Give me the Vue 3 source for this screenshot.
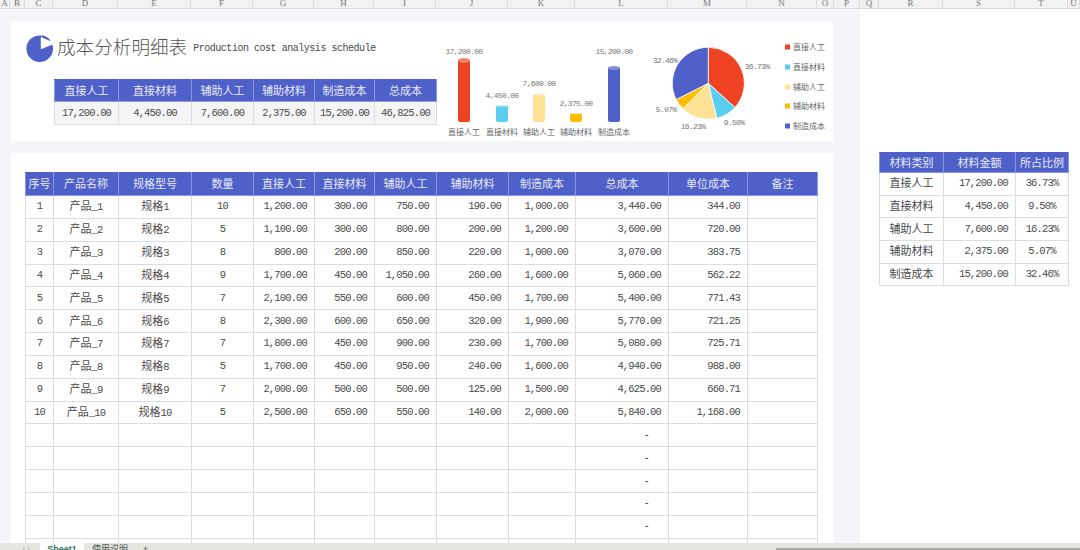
<template>
  <div class="sheet">
    <div class="col-head">
      <span v-for="c in sheetCols" :key="c.name" class="col-name" :style="{ width: c.w + 'px' }">{{ c.name }}</span>
    </div>

    <div class="main">
      <div class="left">
        <section class="card top-card">
          <div class="summary">
            <div class="title-row">
              <svg class="logo" width="28" height="28" viewBox="26 35 28 28">
                <circle cx="39.7" cy="48.7" r="13.3" fill="#4f60c8" />
                <path d="M40.8 38.2V49.2L54 44V36H42Z" fill="#fff" />
                <path d="M42 35.3A13.3 13.3 0 0 1 52 43.4L50.8 41.2 42 37.5Z" fill="#4f60c8" />
              </svg>
              <h1>成本分析明细表</h1>
              <span class="subtitle">Production cost analysis schedule</span>
            </div>
            <table class="sum-table">
              <colgroup>
                <col v-for="w in sumWidths" :key="w" :style="{ width: w + 'px' }" />
              </colgroup>
              <thead>
                <tr><th v-for="h in sumHeads" :key="h">{{ h }}</th></tr>
              </thead>
              <tbody>
                <tr><td v-for="v in sumValues" :key="v" class="num center">{{ v }}</td></tr>
              </tbody>
            </table>
          </div>

          <svg class="chart" width="204" height="120" viewBox="436 21 204 120">
            <g v-for="b in bars" :key="b.label">
              <path :d="barPath(b)" :fill="b.color" />
              <ellipse :cx="b.x + 6" :cy="b.top" rx="6" :ry="b.ry" :fill="b.cap" />
              <text class="chart-num" :x="b.x + 6" :y="b.valueY" text-anchor="middle">{{ b.value }}</text>
              <text class="chart-cjk" :x="b.x + 6" y="135" text-anchor="middle">{{ b.label }}</text>
            </g>
          </svg>

          <svg class="chart" width="193" height="120" viewBox="640 21 193 120">
            <path v-for="s in slices" :key="s.name" :d="s.d" :fill="s.color" stroke="#fff" stroke-width="0.8" />
            <text v-for="s in slices" :key="s.pct" class="chart-num" :x="s.lx" :y="s.ly" text-anchor="middle">{{ s.pct }}</text>
            <g v-for="s in slices" :key="s.name + 'l'">
              <rect x="785" :y="s.legendY - 2.5" width="5" height="5" :fill="s.color" />
              <text class="chart-cjk" x="793" :y="s.legendY + 3">{{ s.name }}</text>
            </g>
          </svg>
        </section>

        <section class="card detail-card">
          <table class="grid">
            <colgroup>
              <col v-for="(w, i) in detailWidths" :key="i" :style="{ width: w + 'px' }" />
            </colgroup>
            <thead>
              <tr><th v-for="h in detailHeads" :key="h">{{ h }}</th></tr>
            </thead>
            <tbody>
              <tr v-for="r in rows" :key="r.id">
                <td class="num center">{{ r.id }}</td>
                <td class="center lift">产品<span class="num">_{{ r.id }}</span></td>
                <td class="center lift">规格<span class="num">{{ r.id }}</span></td>
                <td class="num center">{{ r.qty }}</td>
                <td v-for="(v, i) in r.costs" :key="i" class="num end">{{ v }}</td>
                <td class="num end">{{ r.total }}</td>
                <td class="num end">{{ r.unit }}</td>
                <td></td>
              </tr>
              <tr v-for="n in 6" :key="'e' + n">
                <td v-for="c in 9" :key="c"></td>
                <td class="num dash">-</td>
                <td></td>
                <td></td>
              </tr>
            </tbody>
          </table>
        </section>
      </div>

      <div class="side">
        <table class="grid share">
          <colgroup>
            <col class="c1" /><col class="c2" /><col class="c3" />
          </colgroup>
          <thead>
            <tr><th>材料类别</th><th>材料金额</th><th>所占比例</th></tr>
          </thead>
          <tbody>
            <tr v-for="s in slices" :key="s.name">
              <td class="center lift">{{ s.name }}</td>
              <td class="num end">{{ s.amount }}</td>
              <td class="num center">{{ s.pct }}</td>
            </tr>
          </tbody>
        </table>
      </div>
    </div>

    <div class="tabs">
      <span class="nav">‹ ›</span>
      <span class="tab active">Sheet1</span>
      <span class="tab">使用说明</span>
      <span class="plus">+</span>
      <span class="scroll"></span>
    </div>
  </div>
</template>

<script setup>
const colNames = ['A', 'B', 'C', 'D', 'E', 'F', 'G', 'H', 'I', 'J', 'K', 'L', 'M', 'N', 'O', 'P', 'Q', 'R', 'S', 'T', 'U']
const colWidths = [10, 15, 28, 65, 73, 62, 61, 60, 62, 72, 67, 93, 79, 70, 17, 26, 19, 64, 72, 53, 12]
const sheetCols = colNames.map((name, i) => ({ name, w: colWidths[i] }))

const sumHeads = ['直接人工', '直接材料', '辅助人工', '辅助材料', '制造成本', '总成本']
const sumValues = ['17,200.00', '4,450.00', '7,600.00', '2,375.00', '15,200.00', '46,825.00']
const sumWidths = [64, 73, 62, 61, 60, 62]

const detailWidths = [28, 65, 73, 62, 61, 60, 62, 72, 67, 93, 79, 70]
const detailHeads = ['序号', '产品名称', '规格型号', '数量', '直接人工', '直接材料', '辅助人工', '辅助材料', '制造成本', '总成本', '单位成本', '备注']

const rows = [
  [10, '1,200.00', '300.00', '750.00', '190.00', '1,000.00', '3,440.00', '344.00'],
  [5, '1,100.00', '300.00', '800.00', '200.00', '1,200.00', '3,600.00', '720.00'],
  [8, '800.00', '200.00', '850.00', '220.00', '1,000.00', '3,070.00', '383.75'],
  [9, '1,700.00', '450.00', '1,050.00', '260.00', '1,600.00', '5,060.00', '562.22'],
  [7, '2,100.00', '550.00', '600.00', '450.00', '1,700.00', '5,400.00', '771.43'],
  [8, '2,300.00', '600.00', '650.00', '320.00', '1,900.00', '5,770.00', '721.25'],
  [7, '1,800.00', '450.00', '900.00', '230.00', '1,700.00', '5,080.00', '725.71'],
  [5, '1,700.00', '450.00', '950.00', '240.00', '1,600.00', '4,940.00', '988.00'],
  [7, '2,000.00', '500.00', '500.00', '125.00', '1,500.00', '4,625.00', '660.71'],
  [5, '2,500.00', '650.00', '550.00', '140.00', '2,000.00', '5,840.00', '1,168.00']
].map((r, i) => ({ id: i + 1, qty: r[0], costs: r.slice(1, 6), total: r[6], unit: r[7] }))

const bars = [
  { label: '直接人工', value: '17,200.00', x: 458, top: 60.5, ry: 2.5, valueY: 53.5, color: '#ee4222', cap: '#f1806c' },
  { label: '直接材料', value: '4,450.00', x: 496, top: 106.5, ry: 1, valueY: 98, color: '#5bcdf0', cap: '#7fd9f4' },
  { label: '辅助人工', value: '7,600.00', x: 533, top: 95, ry: 1, valueY: 86, color: '#fde194', cap: '#fde9b0' },
  { label: '辅助材料', value: '2,375.00', x: 570, top: 114, ry: 0.5, valueY: 105.5, color: '#fdbd00', cap: '#fdbd00' },
  { label: '制造成本', value: '15,200.00', x: 608, top: 68, ry: 2, valueY: 53.5, color: '#4f60c8', cap: '#8490dc' }
]

const barPath = (b) => {
  const r = 2
  return `M${b.x} ${b.top}H${b.x + 12}V${122 - r}Q${b.x + 12} 122 ${b.x + 10} 122H${b.x + 2}Q${b.x} 122 ${b.x} ${122 - r}Z`
}

// pie starts at 12 o'clock and goes clockwise
const cx = 708.3
const cy = 83.3
const radius = 36
const pieData = [
  { name: '直接人工', amount: '17,200.00', pct: '36.73%', share: 36.73, color: '#ee4222', lx: 757, ly: 68.5, legendY: 47 },
  { name: '直接材料', amount: '4,450.00', pct: '9.50%', share: 9.5, color: '#5bcdf0', lx: 734, ly: 124.5, legendY: 67 },
  { name: '辅助人工', amount: '7,600.00', pct: '16.23%', share: 16.23, color: '#fde194', lx: 693, ly: 128.5, legendY: 87 },
  { name: '辅助材料', amount: '2,375.00', pct: '5.07%', share: 5.07, color: '#fdbd00', lx: 666, ly: 111.5, legendY: 106 },
  { name: '制造成本', amount: '15,200.00', pct: '32.46%', share: 32.46, color: '#4f60c8', lx: 665, ly: 62.5, legendY: 126 }
]

let acc = 0
const point = (share) => {
  const a = (share / 100) * Math.PI * 2
  return `${(cx + radius * Math.sin(a)).toFixed(2)} ${(cy - radius * Math.cos(a)).toFixed(2)}`
}
const slices = pieData.map((s) => {
  const from = point(acc)
  acc += s.share
  const to = point(acc)
  return { ...s, d: `M${cx} ${cy}L${from}A${radius} ${radius} 0 ${s.share > 50 ? 1 : 0} 1 ${to}Z` }
})
</script>

<style>
html, body {
  margin: 0;
  overflow: hidden;
}
</style>

<style scoped>
.sheet {
  width: 1080px;
  height: 550px;
  display: flex;
  flex-direction: column;
  overflow: hidden;
  background: #fff;
  font-family: "Noto Sans CJK SC", sans-serif;
  font-size: 11px;
  color: #4a4a4a;
}

.col-head {
  height: 9px;
  flex: none;
  display: flex;
  overflow: hidden;
  background: #f2f2f2;
  border-bottom: 1px solid #d9d9d9;
  box-sizing: border-box;
}

.col-name {
  flex: none;
  box-sizing: border-box;
  border-right: 1px solid #dcdcdc;
  font-family: "Liberation Serif", serif;
  font-size: 9px;
  line-height: 6px;
  text-align: center;
  color: #777;
}

.main {
  flex: 1;
  min-height: 0;
  display: flex;
  overflow: hidden;
}

.left {
  width: 860px;
  flex: none;
  box-sizing: border-box;
  padding: 12px 27px 0 11px;
  background: #f4f5f8;
  display: flex;
  flex-direction: column;
  gap: 12px;
}

.card {
  background: #fff;
}

.top-card {
  height: 120px;
  flex: none;
  display: flex;
}

.summary {
  width: 425px;
  flex: none;
  box-sizing: border-box;
  padding: 14px 0 0 15px;
}

.title-row {
  height: 28px;
  display: flex;
  align-items: center;
}

.logo {
  flex: none;
  margin-right: 3px;
}

h1 {
  margin: -8px 0 0;
  font-size: 18.6px;
  font-weight: 300;
  color: #555;
  white-space: nowrap;
}

.subtitle {
  margin: -1px 0 0 6px;
  font-family: "Liberation Mono", monospace;
  font-size: 10px;
  letter-spacing: -0.47px;
  color: #4a4a4a;
  white-space: nowrap;
}

table {
  border-collapse: collapse;
  table-layout: fixed;
}

th {
  box-sizing: border-box;
  background: #4f60c8;
  color: #e8ebfa;
  font-weight: 400;
  padding: 0 0 2px;
  border: 1px solid #8a97e2;
  border-top-color: #4f60c8;
  border-bottom-color: #8a97e2;
}

td {
  box-sizing: border-box;
  padding: 0 0 1px;
  border: 1px solid #dcdce2;
  white-space: nowrap;
}

td.lift {
  padding-bottom: 3px;
}

.sum-table {
  width: 382px;
  margin: 16px 0 0 28px;
}

.sum-table th {
  height: 22px;
}

.sum-table td {
  height: 23px;
  background: #f5f5f5;
}

.chart {
  flex: none;
  display: block;
}

.chart-num {
  font-family: "Liberation Mono", monospace;
  font-size: 8px;
  letter-spacing: -0.7px;
  fill: #777;
}

.chart-cjk {
  font-size: 8px;
  fill: #666;
}

.detail-card {
  flex: 1;
  min-height: 0;
  box-sizing: border-box;
  padding: 19px 0 0 14px;
  overflow: hidden;
}

.grid {
  width: 792px;
}

.grid th {
  height: 23px;
}

.grid td {
  height: 22.85px;
}

.num {
  font-family: "Liberation Mono", monospace;
  font-size: 10.5px;
  letter-spacing: -0.85px;
}

.center {
  text-align: center;
}

td.end {
  text-align: right;
  padding-right: 7px;
}

td.dash {
  text-align: right;
  padding-right: 19px;
}

.side {
  flex: 1;
}

.share {
  width: 189px;
  margin: 143px 0 0 19px;
}

.share .c1 { width: 64px; }
.share .c2 { width: 72px; }
.share .c3 { width: 53px; }

.share th {
  height: 20px;
}

.share td {
  height: 22.7px;
}

.tabs {
  height: 7px;
  flex: none;
  display: flex;
  align-items: flex-start;
  background: #e3e7e0;
  overflow: hidden;
  font-size: 9px;
  line-height: 12px;
}

.nav {
  width: 40px;
  flex: none;
  text-align: right;
  padding-right: 10px;
  box-sizing: border-box;
  color: #999;
}

.tab {
  flex: none;
  padding: 0 7px;
  color: #555;
}

.tab.active {
  width: 44px;
  box-sizing: border-box;
  background: #fff;
  color: #1f7a5c;
  font-weight: 700;
  font-family: "Liberation Sans", sans-serif;
  text-align: center;
  padding: 0;
  margin-right: 1px;
}

.plus {
  margin-left: 8px;
  color: #555;
}

.scroll {
  margin: 5px 0 0 auto;
  width: 304px;
  height: 2px;
  background: #a9aca8;
}
</style>
